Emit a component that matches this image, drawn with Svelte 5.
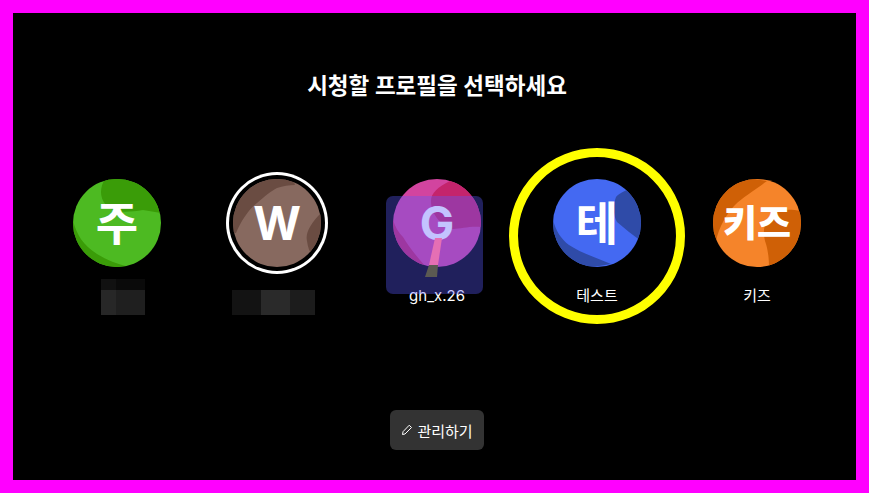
<script>
  const profiles = [
    { id: 'ju', letter: '주', base: '#4dba22', dark: '#3a9c08', shapes: ['M32 0 C27 8 26 18 33 26 C41 35 56 33 70 31 L88 34 L88 0 Z', 'M0 42 C4 56 10 66 24 75 C34 81 44 85 56 88 L0 88 Z'] },
    { id: 'w', letter: 'W', base: '#87695f', dark: '#6a4c42', ring: true, shapes: ['M0 54 L3 54 C8 42 16 30 24 24 C32 17 38 12 44 9 C50 7 56 6 62 6 L60 0 L0 0 Z', 'M88 34 C78 44 72 54 74 62 C75 70 78 76 82 80 L88 80 Z'] },
    { id: 'g', letter: 'G', label: 'gh_x.26', base: '#d2449f', dark: '#c4246c', dragged: true, shapes: ['M57 2 C45 8 38 14 38 22 C38 35 48 47 60 50 C68 50 76 47 88 48 L88 0 Z', 'M0 41 C2 48 6 54 10 58 C16 68 24 78 33 88 L0 88 Z'] },
    { id: 'te', letter: '테', label: '테스트', base: '#4469f2', dark: '#2f4ba8', marked: true, shapes: ['M76 10 C70 13 65 15 63 18 C60 26 60 36 64 43 C72 50 80 56 88 62 L88 10 Z', 'M0 41 C3 52 8 60 16 66 C28 74 44 79 58 85 L40 88 L0 88 Z'] },
    { id: 'kids', letter: '키즈', label: '키즈', small: true, base: '#f5842a', dark: '#cf6006', shapes: ['M0 62 L3 62 C6 48 14 34 22 26 C30 18 42 11 54 2 L40 0 L0 0 Z', 'M88 32 C76 30 66 30 58 36 C50 44 50 54 52 62 C55 70 56 80 56 88 L88 88 Z'] }
  ];
</script>

<main class="frame">
  <h1>시청할 프로필을 선택하세요</h1>

  <div class="row">
    {#each profiles as p}
      <div class="item">
        <div class="avatar" class:ring={p.ring} style="background:{p.base}">
          <svg viewBox="0 0 88 88" width="88" height="88" aria-hidden="true">
            {#each p.shapes as d}
              <path {d} fill={p.dark} />
            {/each}
          </svg>
          <span class="letter" class:small={p.small}>{p.letter}</span>
        </div>

        {#if p.label}
          <div class="name">{p.label}</div>
        {:else if p.id === 'ju'}
          <div class="mosaic ju">
            <i class="c1"></i><i class="c2"></i>
            <i class="c3"></i><i class="c4"></i>
          </div>
        {:else}
          <div class="mosaic wn">
            <i class="c5"></i><i class="c6"></i><i class="c7"></i>
          </div>
        {/if}

        {#if p.dragged}
          <div class="drag"></div>
          <svg class="stem" viewBox="0 0 20 42" width="20" height="42" aria-hidden="true">
            <path d="M11 2 L18 2 L14 29 L5 29 Z" fill="#e56fb4" />
            <path d="M5 29 L14 29 L13 41 L1 41 Z" fill="#5b5a52" />
          </svg>
        {/if}
        {#if p.marked}
          <div class="circle-mark"></div>
        {/if}
      </div>
    {/each}
  </div>

  <button class="manage">
    <svg viewBox="0 0 24 24" width="12" height="12" fill="none" stroke="#fff" stroke-width="2" stroke-linecap="round" stroke-linejoin="round" aria-hidden="true">
      <path d="M17 3 L21 7 L8 20 L3 21 L4 16 Z" />
    </svg>
    관리하기
  </button>
</main>

<style>
  :global(body) {
    margin: 0;
    background: #000;
  }

  .frame {
    box-sizing: border-box;
    width: 869px;
    height: 493px;
    border: 13px solid #ff00ff;
    background: #000;
    color: #fff;
    padding: 58px 0 0 5px;
    display: flex;
    flex-direction: column;
    align-items: center;
    font-family: Inter, "Noto Sans CJK KR", sans-serif;
  }

  h1 {
    margin: 0;
    font-size: 22.5px;
    line-height: 30px;
    font-weight: 600;
  }

  .row {
    display: flex;
    margin-top: 78px;
  }

  .item {
    position: relative;
    width: 160px;
    display: flex;
    flex-direction: column;
    align-items: center;
  }

  .avatar {
    position: relative;
    width: 88px;
    height: 88px;
    border-radius: 50%;
    overflow: hidden;
    display: flex;
    align-items: center;
    justify-content: center;
  }

  .avatar svg {
    position: absolute;
    inset: 0;
  }

  .avatar.ring {
    overflow: visible;
    box-shadow: 0 0 0 4px #000, 0 0 0 7px #fff;
  }

  .avatar.ring svg {
    border-radius: 50%;
  }

  .letter {
    position: relative;
    font-size: 46px;
    font-weight: 700;
    line-height: 1;
    color: #fff;
  }

  .letter.small {
    font-size: 37px;
    font-weight: 800;
  }

  .name {
    margin-top: 19px;
    font-size: 15px;
    line-height: 20px;
    color: #fff;
  }

  .mosaic {
    display: grid;
  }

  .mosaic.ju {
    margin-top: 12px;
    margin-left: 12px;
    grid-template-columns: 15px 29px;
    grid-template-rows: 11px 25px;
  }

  .mosaic.wn {
    margin-top: 23px;
    margin-right: 8px;
    grid-template-columns: 29px 29px 25px;
    grid-template-rows: 25px;
  }

  .c1 { background: #111; }
  .c2 { background: #0a0a0a; }
  .c3 { background: #272727; }
  .c4 { background: #1f1f1f; }
  .c5 { background: #131313; }
  .c6 { background: #2a2a2a; }
  .c7 { background: #1c1c1c; }

  /* dragged copy of the tile, sits over the avatar */
  .drag {
    position: absolute;
    left: 29px;
    top: 17px;
    width: 97px;
    height: 98px;
    border-radius: 7px;
    background: rgba(88, 90, 255, 0.36);
  }

  .stem {
    position: absolute;
    left: 67px;
    top: 57px;
  }

  .circle-mark {
    position: absolute;
    left: -8px;
    top: -31px;
    box-sizing: border-box;
    width: 176px;
    height: 176px;
    border: 9px solid #ffff00;
    border-radius: 50%;
  }

  .manage {
    margin-top: 95px;
    display: flex;
    align-items: center;
    justify-content: center;
    gap: 4px;
    width: 94px;
    height: 40px;
    border: none;
    border-radius: 6px;
    background: #333;
    color: #fff;
    font-family: inherit;
    font-size: 15px;
    font-weight: 400;
  }
</style>
